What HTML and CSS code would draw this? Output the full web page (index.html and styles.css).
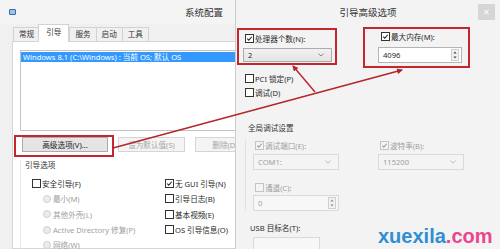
FILE: index.html
```html
<!DOCTYPE html>
<html lang="zh-CN">
<head>
    <meta charset="UTF-8">
    <title>系统配置 - 引导高级选项</title>
    <link rel="stylesheet" href="styles.css">
</head>
<body>
    <div class="screen">
        <div class="win sysconf">
            <div class="titlebar">
                <span class="app-icon"></span>
                <span class="title">系统配置</span>
            </div>
            <div class="tabs">
                <span class="tab">常规</span>
                <span class="tab active">引导</span>
                <span class="tab">服务</span>
                <span class="tab">启动</span>
                <span class="tab">工具</span>
            </div>
            <div class="tab-page">
                <div class="os-list">
                    <div class="os-item selected">Windows 8.1 (C:\Windows) : 当前 OS; 默认 OS</div>
                </div>
                <div class="btn-row">
                    <span class="hl-box"><button class="btn wide">高级选项(V)...</button></span>
                    <button class="btn mid" disabled>设为默认值(S)</button>
                    <button class="btn" disabled>删除(D)</button>
                </div>
                <div class="group">
                    <div class="group-label">引导选项</div>
                    <div class="opt-grid">
                        <div class="opt-col">
                            <label class="chk"><span class="box"></span>安全引导(F)</label>
                            <label class="radio off"><span class="dot"></span>最小(M)</label>
                            <label class="radio off"><span class="dot"></span>其他外壳(L)</label>
                            <label class="radio off"><span class="dot"></span>Active Directory 修复(P)</label>
                            <label class="radio off"><span class="dot"></span>网络(W)</label>
                        </div>
                        <div class="opt-col">
                            <label class="chk"><span class="box"><svg viewBox="0 0 9 9"><path d="M1.6 4.6 L3.6 6.6 L7.4 2.2" fill="none" stroke="#222" stroke-width="1.3"/></svg></span>无 GUI 引导(N)</label>
                            <label class="chk"><span class="box"></span>引导日志(B)</label>
                            <label class="chk"><span class="box"></span>基本视频(E)</label>
                            <label class="chk"><span class="box"></span>OS 引导信息(O)</label>
                        </div>
                    </div>
                </div>
            </div>
        </div>

        <div class="win advdlg">
            <div class="titlebar dlg-bar">
                <span></span>
                <span class="title">引导高级选项</span>
                <span class="close">✕</span>
            </div>
            <div class="dlg-body">
                <div class="top-row">
                    <div class="hl-frame cpu">
                        <label class="chk"><span class="box"><svg viewBox="0 0 9 9"><path d="M1.6 4.6 L3.6 6.6 L7.4 2.2" fill="none" stroke="#222" stroke-width="1.3"/></svg></span>处理器个数(N):</label>
                        <div class="combo cpu-combo">
                            <span>2</span>
                            <svg class="chev" viewBox="0 0 7 4"><path d="M0.5 0.5 L3.5 3.2 L6.5 0.5" fill="none" stroke="#666" stroke-width="0.9"/></svg>
                        </div>
                    </div>
                    <div class="hl-frame mem">
                        <label class="chk"><span class="box"><svg viewBox="0 0 9 9"><path d="M1.6 4.6 L3.6 6.6 L7.4 2.2" fill="none" stroke="#222" stroke-width="1.3"/></svg></span>最大内存(M):</label>
                        <div class="spin mem-spin">
                            <span class="spin-val">4096</span>
                            <span class="spin-btns">
                                <svg viewBox="0 0 5 3"><path d="M0.5 2.6 L2.5 0.4 L4.5 2.6 Z" fill="#444"/></svg>
                                <svg viewBox="0 0 5 3"><path d="M0.5 0.4 L2.5 2.6 L4.5 0.4 Z" fill="#444"/></svg>
                            </span>
                        </div>
                    </div>
                </div>
                <div class="adv-opts">
                    <label class="chk"><span class="box"></span>PCI 锁定(P)</label>
                    <label class="chk"><span class="box"></span>调试(D)</label>
                </div>
                <div class="debug-group">
                    <div class="group-label">全局调试设置</div>
                    <div class="grp-body">
                        <div class="grp-cols">
                            <div>
                                <label class="chk off"><span class="box"><svg viewBox="0 0 9 9"><path d="M1.6 4.6 L3.6 6.6 L7.4 2.2" fill="none" stroke="#999" stroke-width="1.3"/></svg></span>调试端口(E):</label>
                                <div class="combo off">
                                    <span>COM1:</span>
                                    <svg class="chev" viewBox="0 0 7 4"><path d="M0.5 0.5 L3.5 3.2 L6.5 0.5" fill="none" stroke="#aaa" stroke-width="0.9"/></svg>
                                </div>
                            </div>
                            <div>
                                <label class="chk off"><span class="box"><svg viewBox="0 0 9 9"><path d="M1.6 4.6 L3.6 6.6 L7.4 2.2" fill="none" stroke="#999" stroke-width="1.3"/></svg></span>波特率(B):</label>
                                <div class="combo off">
                                    <span>115200</span>
                                    <svg class="chev" viewBox="0 0 7 4"><path d="M0.5 0.5 L3.5 3.2 L6.5 0.5" fill="none" stroke="#aaa" stroke-width="0.9"/></svg>
                                </div>
                            </div>
                        </div>
                        <label class="chk off channel"><span class="box"></span>通道(C):</label>
                        <div class="spin off">
                            <span class="spin-val">0</span>
                            <span class="spin-btns">
                                <svg viewBox="0 0 5 3"><path d="M0.5 2.6 L2.5 0.4 L4.5 2.6 Z" fill="#888"/></svg>
                                <svg viewBox="0 0 5 3"><path d="M0.5 0.4 L2.5 2.6 L4.5 0.4 Z" fill="#888"/></svg>
                            </span>
                        </div>
                    </div>
                    <div class="usb-label">USB 目标名(T):</div>
                    <div class="usb-input"></div>
                </div>
            </div>
        </div>
    </div>

    <svg class="arrows" width="500" height="249" viewBox="0 0 500 249">
        <defs>
            <marker id="head" markerWidth="6" markerHeight="6" refX="5" refY="3" orient="auto" markerUnits="userSpaceOnUse">
                <path d="M0 0 L6 3 L0 6 Z" fill="#b3262c"/>
            </marker>
        </defs>
        <line x1="113" y1="148" x2="402" y2="70" stroke="#b3262c" stroke-width="1.4" marker-end="url(#head)"/>
        <line x1="315" y1="92" x2="293" y2="66" stroke="#b3262c" stroke-width="1.4" marker-end="url(#head)"/>
    </svg>

    <div class="watermark"><span class="wm-blue">xuexila</span><span class="wm-pink">.com</span></div>
</body>
</html>
```

FILE: styles.css
```css
* {
    box-sizing: border-box;
}
body {
    margin: 0;
    width: 500px;
    height: 249px;
    overflow: hidden;
    position: relative;
    font-family: "Noto Sans", "Noto Sans CJK SC", sans-serif;
    font-size: 7.6px;
    color: #2a2a2a;
    background: #f0f0f0;
}
.screen {
    display: flex;
    height: 249px;
}
.win {
    height: 249px;
    overflow: hidden;
}
.titlebar {
    height: 24px;
    display: flex;
    align-items: center;
}
.title {
    font-size: 9.5px;
    color: #333;
}

/* 系统配置 */
.sysconf {
    width: 235px;
    flex: none;
    background: #f0f0f0;
}
.sysconf .titlebar {
    padding-left: 9px;
    background: #f4f4f4;
}
.app-icon {
    width: 7px;
    height: 6px;
    border: 1px solid #3b6ea5;
    background: #9cc3ea;
    border-radius: 1px;
}
.sysconf .title {
    margin-left: 169px;
    white-space: nowrap;
}
.tabs {
    display: flex;
    align-items: flex-end;
    height: 17px;
    padding-left: 13px;
}
.tab {
    height: 14px;
    line-height: 12px;
    padding: 0 5px;
    border: 1px solid #d2d2d2;
    border-bottom: none;
    margin-right: -1px;
    background: #f0f0f0;
    color: #333;
    white-space: nowrap;
}
.tab.active {
    height: 18px;
    line-height: 14px;
    padding: 0 7px;
    margin: 0 0 -1px -1px;
    background: #fff;
    position: relative;
    z-index: 1;
}
.tab-page {
    margin-left: 12px;
    width: 260px;
    height: 208px;
    border: 1px solid #d6d6d6;
    background: #fff;
    padding: 8px 0 0 7px;
}
.os-list {
    width: 240px;
    height: 81px;
    border: 1px solid #c3c3c3;
    padding-top: 1px;
}
.os-item {
    height: 10px;
    line-height: 10px;
    padding-left: 2px;
    white-space: nowrap;
}
.os-item.selected {
    background: #3399ff;
    color: #fff;
}
.btn-row {
    display: flex;
    align-items: flex-start;
    margin: 4px 0 0 -6px;
}
.hl-box {
    display: block;
    border: 2px solid #c1272d;
    padding: 0 4px 3px 6px;
}
.btn {
    height: 15px;
    padding: 0;
    font: inherit;
    border: 1px solid #acacac;
    background: #e5e5e5;
    color: #222;
    width: 60px;
}
.btn.wide {
    width: 86px;
    display: block;
}
.btn.mid {
    width: 67px;
    margin-left: 4px;
}
.btn:disabled {
    margin-top: 2px;
    border-color: #d5d5d5;
    background: #f4f4f4;
    color: #a6a6a6;
}
.btn:disabled + .btn:disabled {
    margin-left: 10px;
}
.group {
    margin-top: 3px;
    border-left: 1px solid #e6e6e6;
    padding-left: 4px;
}
.group-label {
    line-height: 10px;
    color: #333;
}
.opt-grid {
    display: grid;
    grid-template-columns: 133px 80px;
    margin-top: 6px;
    padding-left: 7px;
}
.opt-col {
    display: flex;
    flex-direction: column;
}
.chk, .radio {
    display: flex;
    align-items: center;
    white-space: nowrap;
    height: 15.3px;
}
.box {
    width: 9px;
    height: 9px;
    border: 1px solid #333;
    background: #fff;
    margin-right: 1px;
    flex: none;
}
.box svg {
    display: block;
    width: 7px;
    height: 7px;
}
.radio {
    margin-left: 11px;
}
.dot {
    width: 8px;
    height: 8px;
    border-radius: 50%;
    border: 1px solid #d0d0d0;
    background: #ececec;
    margin-right: 2px;
    flex: none;
}
.off {
    color: #a0a0a0;
}
.off .box {
    border-color: #c4c4c4;
    background: #f4f4f4;
}

/* 引导高级选项 */
.advdlg {
    flex: 1;
    background: #f3f3f3;
    border-left: 1px solid #cdcdcd;
}
.dlg-bar {
    display: grid;
    grid-template-columns: 1fr auto 1fr;
}
.close {
    justify-self: end;
    margin-right: 5px;
    width: 17px;
    height: 16px;
    background: #d6d6d6;
    color: #fff;
    font-size: 8px;
    line-height: 16px;
    text-align: center;
}
.dlg-body {
    padding-left: 1px;
}
.top-row {
    display: flex;
    align-items: flex-start;
    padding-top: 3px;
}
.hl-frame {
    border: 2px solid #c1272d;
}
.hl-frame .chk {
    height: 9px;
}
.cpu {
    width: 100px;
    height: 37px;
    margin-top: 1px;
    padding: 4px 0 0 6px;
}
.mem {
    width: 107px;
    height: 41px;
    margin-left: 26px;
    padding: 3px 0 0 16px;
}
.combo {
    display: flex;
    align-items: center;
    justify-content: space-between;
    width: 86px;
    height: 16px;
    margin-top: 3px;
    padding: 0 7px 0 4px;
    border: 1px solid #acacac;
    background: linear-gradient(#f2f2f2, #e4e4e4);
}
.combo.off {
    border-color: #dadada;
    background: #f4f4f4;
    color: #a0a0a0;
}
.chev {
    width: 6px;
    height: 4px;
}
.cpu-combo {
    width: 89px;
    height: 14px;
    margin: 5px 0 0 -2px;
}
.spin {
    display: flex;
    align-items: stretch;
    width: 86px;
    height: 16px;
    margin-top: 2px;
    border: 1px solid #b4b4b4;
    background: #fff;
}
.spin.off {
    border-color: #dadada;
    background: #f7f7f7;
    color: #a0a0a0;
}
.spin-val {
    flex: 1;
    line-height: 14px;
    padding-left: 4px;
}
.spin-btns {
    width: 8px;
    margin: 1px 2px 1px 0;
    display: flex;
    flex-direction: column;
    justify-content: space-around;
    align-items: center;
    border: 1px solid #cfcfcf;
    background: #f2f2f2;
}
.spin-btns svg {
    width: 4px;
    height: 3px;
}
.mem-spin {
    width: 84px;
    margin: 6px 0 0 -3px;
}
.adv-opts {
    margin-top: 3px;
    padding-left: 8px;
}
.adv-opts .chk {
    height: 14px;
}
.debug-group {
    margin: 24px 0 0 8px;
}
.debug-group .group-label {
    padding-left: 3px;
}
.grp-body {
    margin-top: 6px;
    border-left: 1px solid #e2e2e2;
    padding-left: 7px;
}
.grp-cols {
    display: grid;
    grid-template-columns: 86px 87px;
    column-gap: 39px;
}
.grp-body .chk {
    height: 12px;
    padding-left: 2px;
}
.grp-body .chk.channel {
    margin-top: 11px;
}
.usb-label {
    margin-top: 11px;
    padding-left: 5px;
    line-height: 12px;
}
.usb-input {
    width: 67px;
    height: 20px;
    margin: 3px 0 0 8px;
    border: 1px solid #dadada;
    background: #f7f7f7;
}

/* 标注 */
.arrows {
    position: absolute;
    left: 0;
    top: 0;
    pointer-events: none;
}
.watermark {
    position: absolute;
    left: 378px;
    top: 226px;
    font-family: "Liberation Sans", Arial, sans-serif;
    font-weight: bold;
    font-size: 20px;
    line-height: 20px;
    white-space: nowrap;
}
.wm-blue {
    color: #2f8fd3;
}
.wm-pink {
    color: #e8468e;
}
```
